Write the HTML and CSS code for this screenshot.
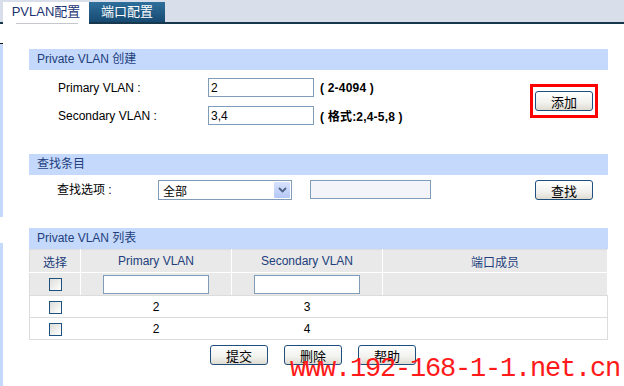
FILE: index.html
```html
<!DOCTYPE html>
<html lang="zh-CN">
<head>
    <meta charset="UTF-8">
    <title>PVLAN配置</title>
    <link rel="stylesheet" href="styles.css">
</head>
<body>

    <div class="tabs">
        <div class="tab active">PVLAN配置</div>
        <div class="tab">端口配置</div>
    </div>

    <div class="page">
        <div class="rail">
            <div class="rail-top"></div>
            <div class="rail-seg first"></div>
            <div class="rail-seg second"></div>
        </div>

        <div class="main">
            <!-- Private VLAN create -->
            <div class="section">
                <div class="section-title">Private VLAN 创建</div>
                <div class="create-body">
                    <div class="create-rows">
                        <div class="row">
                            <span class="label">Primary VLAN :</span>
                            <input class="text-input" type="text" value="2">
                            <span class="hint">( 2-4094 )</span>
                        </div>
                        <div class="row">
                            <span class="label">Secondary VLAN :</span>
                            <input class="text-input" type="text" value="3,4">
                            <span class="hint">( 格式:2,4-5,8 )</span>
                        </div>
                    </div>
                    <div class="highlight">
                        <button class="btn">添加</button>
                    </div>
                </div>
            </div>

            <!-- search -->
            <div class="section">
                <div class="section-title">查找条目</div>
                <div class="search-body">
                    <span class="label short">查找选项 :</span>
                    <div class="select">
                        <span>全部</span>
                        <span class="select-arrow">
                            <svg width="9" height="6" viewBox="0 0 9 6"><path d="M1 1 L4.5 4.5 L8 1" fill="none" stroke="#4d6185" stroke-width="1.8"/></svg>
                        </span>
                    </div>
                    <input class="text-input search-input" type="text">
                    <button class="btn search-btn">查找</button>
                </div>
            </div>

            <!-- list -->
            <div class="section">
                <div class="section-title">Private VLAN 列表</div>
                <table class="list">
                    <tr class="head">
                        <th class="col-sel">选择</th>
                        <th class="col-vlan">Primary VLAN</th>
                        <th class="col-vlan">Secondary VLAN</th>
                        <th>端口成员</th>
                    </tr>
                    <tr class="filter">
                        <td><span class="check"></span></td>
                        <td><span class="cell-input"></span></td>
                        <td><span class="cell-input"></span></td>
                        <td></td>
                    </tr>
                    <tr class="data">
                        <td><span class="check"></span></td>
                        <td>2</td>
                        <td>3</td>
                        <td></td>
                    </tr>
                    <tr class="data">
                        <td><span class="check"></span></td>
                        <td>2</td>
                        <td>4</td>
                        <td></td>
                    </tr>
                </table>
            </div>

            <div class="actions">
                <button class="btn">提交</button>
                <button class="btn">删除</button>
                <button class="btn">帮助</button>
            </div>
        </div>
    </div>

    <div class="watermark">www.192-168-1-1.net.cn</div>

</body>
</html>
```

FILE: styles.css
```css
body {
    margin: 0;
    font-family: 'Liberation Sans', 'Noto Sans CJK SC', sans-serif;
    font-size: 12px;
    color: #000;
    background-color: #fff;
    position: relative;
    height: 386px;
    overflow: hidden;
}

/* Tab bar */
.tabs {
    display: flex;
    align-items: flex-end;
    height: 22px;
    padding-left: 3px;
    background-color: #d8dfea;
    border-bottom: 2px solid #17374c;
}

.tab {
    height: 20px;
    width: 76px;
    line-height: 20px;
    text-align: center;
    font-size: 13px;
    color: #fff;
    background: linear-gradient(#2f6f9c, #174a72);
}

.tab.active {
    width: 86px;
    height: 22px;
    margin-bottom: -2px;
    line-height: 20px;
    color: #1c3473;
    background: #fff;
    position: relative;
}

.tab.active::after {
    content: "";
    position: absolute;
    left: 13px;
    right: 11px;
    top: 21px;
    height: 1px;
    background: #c4c8cc;
}

/* Page */
.page {
    display: flex;
}

.rail {
    width: 3px;
    padding-top: 19px;
}

.rail-top {
    height: 1px;
    background: #111;
}

.rail-seg {
    background: #c5d9fc;
}

.rail-seg.first {
    height: 173px;
}

.rail-seg.second {
    height: 150px;
    margin-top: 26px;
}

.main {
    width: 579px;
    margin-left: 26px;
    padding-top: 25px;
}

.section-title {
    height: 21px;
    line-height: 21px;
    padding-left: 8px;
    background-color: #c5d9fc;
    color: #223e7c;
    font-size: 12px;
}

/* Create form */
.create-body {
    display: flex;
    align-items: flex-start;
    height: 84px;
}

.create-rows {
    width: 501px;
    padding-top: 8px;
}

.row {
    display: flex;
    align-items: center;
    height: 19px;
    margin-bottom: 9px;
}

.label {
    width: 150px;
    padding-left: 29px;
}

.label.short {
    width: 101px;
    padding-left: 28px;
}

.text-input {
    box-sizing: border-box;
    width: 106px;
    height: 19px;
    margin: 0;
    padding: 0 2px;
    border: 1px solid #7f9db9;
    font-family: 'Liberation Sans', sans-serif;
    font-size: 12px;
    color: #000;
    background: #fff;
}

.hint {
    margin-left: 6px;
    font-weight: bold;
    letter-spacing: 0.2px;
}

.highlight {
    margin-top: 14px;
    padding: 4px 2px;
    border: 3px solid #ff0000;
}

.btn {
    display: block;
    width: 58px;
    height: 20px;
    padding: 0;
    border: 1px solid #1e4f7f;
    border-radius: 3px;
    background: linear-gradient(#ffffff, #f1f1ee 60%, #dedbd0);
    font-family: 'Noto Sans CJK SC', sans-serif;
    font-size: 13px;
    line-height: 17px;
    color: #000;
}

/* Search */
.search-body {
    display: flex;
    align-items: flex-start;
    height: 53px;
    padding-top: 5px;
    box-sizing: border-box;
}

.search-body .label {
    line-height: 20px;
}

.select {
    box-sizing: border-box;
    display: flex;
    justify-content: space-between;
    align-items: center;
    width: 134px;
    height: 20px;
    padding: 1px 1px 1px 4px;
    border: 1px solid #7f9db9;
    font-size: 12px;
}

.select-arrow {
    display: flex;
    align-items: center;
    justify-content: center;
    width: 16px;
    height: 16px;
    background: linear-gradient(#d6e2fd, #b5c8f4);
    border-radius: 1px;
}

.search-input {
    width: 121px;
    margin-left: 18px;
    background: #f3f4f9;
}

.search-btn {
    margin-left: 104px;
}

/* List table */
.list {
    width: 579px;
    border-collapse: collapse;
    border: 1px solid #dcdcdc;
    font-size: 12px;
}

.list th {
    height: 22px;
    padding: 0;
    font-weight: normal;
    color: #223e7c;
    background: #e9e9e9;
    border-right: 1px solid #fff;
    border-bottom: 1px solid #fff;
}

.list .col-sel {
    width: 50px;
}

.list .col-vlan {
    width: 150px;
}

.list td {
    padding: 0;
    text-align: center;
}

.list .filter td {
    height: 22px;
    background: #e9e9e9;
    border-right: 1px solid #fff;
    border-bottom: 1px solid #dcdcdc;
}

.list .data td {
    height: 21px;
    border-bottom: 1px solid #dcdcdc;
}

.check {
    display: inline-block;
    box-sizing: border-box;
    width: 13px;
    height: 13px;
    vertical-align: middle;
    border: 1px solid #1c5180;
    background: linear-gradient(135deg, #dcdcd7, #ffffff);
}

.cell-input {
    display: inline-block;
    box-sizing: border-box;
    width: 106px;
    height: 19px;
    vertical-align: middle;
    border: 1px solid #7f9db9;
    background: #fff;
}

/* Bottom buttons */
.actions {
    display: flex;
    gap: 16px;
    padding-left: 181px;
    margin-top: 5px;
}

.actions .btn {
    width: 58px;
}

.watermark {
    position: absolute;
    left: 290px;
    top: 354px;
    font-family: 'Liberation Mono', monospace;
    font-size: 27px;
    letter-spacing: -1.2px;
    color: #ff1a1a;
    white-space: nowrap;
}
```
